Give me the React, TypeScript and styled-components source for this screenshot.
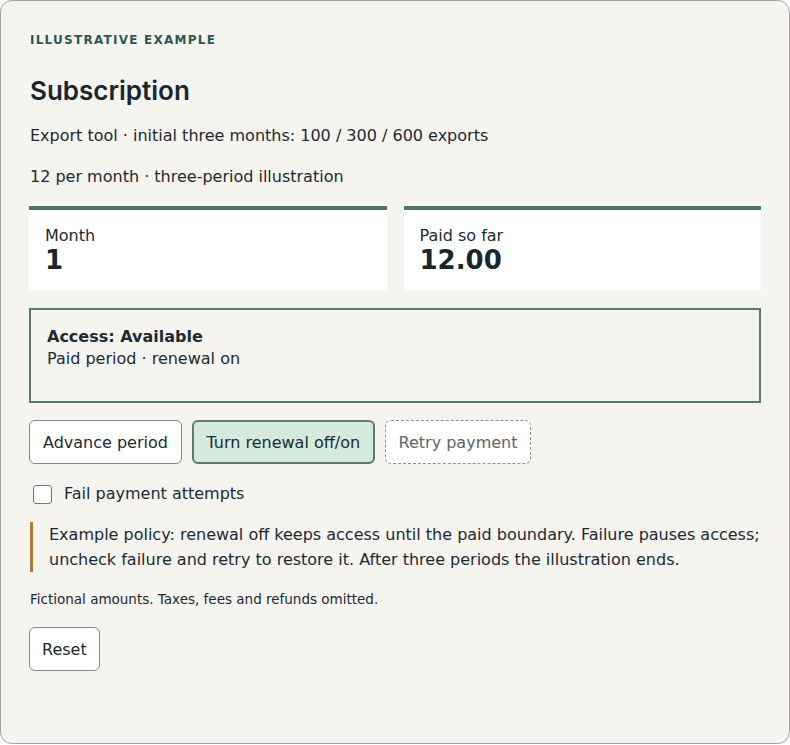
import React, { useState } from "react";
import styled, { createGlobalStyle } from "styled-components";

const GlobalStyle = createGlobalStyle`
    body {
        margin: 0;
        background: #ffffff;
        font-family: "DejaVu Sans", sans-serif;
        color: #1c2a33;
    }
`;

const Card = styled.section`
    box-sizing: border-box;
    width: 790px;
    min-height: 744px;
    padding: 29px 28px 40px;
    background: #f5f4ef;
    border: 1px solid #9aa5a1;
    border-radius: 12px;
`;

const Eyebrow = styled.div`
    padding-left: 1px;
    font-size: 12px;
    font-weight: 700;
    letter-spacing: 1.25px;
    color: #2a5853;
    text-transform: uppercase;
    line-height: 20px;
`;

const Title = styled.h1`
    margin: 24px 0 0;
    padding-left: 1px;
    font-family: Inter, "DejaVu Sans", sans-serif;
    font-size: 26px;
    font-weight: 600;
    line-height: 34px;
    color: #18262f;
`;

const Lead = styled.p`
    margin: 16px 0 0 1px;
    font-size: 16px;
    line-height: 24px;

    & + & {
        margin-top: 17px;
    }
`;

const Stats = styled.div`
    display: grid;
    grid-template-columns: 1fr 1fr;
    gap: 17px;
    margin-top: 17px;
`;

const Stat = styled.div`
    box-sizing: border-box;
    height: 85px;
    padding: 16px 16px 0;
    background: #ffffff;
    border-top: 4px solid #4f7569;
`;

const StatLabel = styled.div`
    font-size: 16px;
    line-height: 19px;
`;

const StatValue = styled.div`
    font-size: 26px;
    font-weight: 700;
    line-height: 30px;
    color: #18262f;
`;

const Status = styled.div`
    box-sizing: border-box;
    min-height: 95px;
    margin-top: 17px;
    padding: 16px 16px;
    border: 2px solid #557a70;
`;

const StatusTitle = styled.div`
    font-size: 16px;
    font-weight: 700;
    line-height: 22px;
`;

const StatusText = styled.div`
    font-size: 16px;
    line-height: 22px;
`;

const Actions = styled.div`
    display: flex;
    gap: 10px;
    margin-top: 17px;
`;

const Button = styled.button<{ variant?: "primary" | "pending" }>`
    box-sizing: border-box;
    height: 44px;
    padding: 0 ${({ variant }) => (variant === "primary" ? "12.5px" : "13px")};
    font-family: "DejaVu Sans", sans-serif;
    font-size: 16px;
    border-radius: 6px;
    cursor: pointer;
    color: ${({ variant }) => (variant === "pending" ? "#5d6468" : "#1c2a33")};
    background: ${({ variant }) => (variant === "primary" ? "#d3eadd" : "#ffffff")};
    border: ${({ variant }) =>
        variant === "primary"
            ? "2px solid #5f7a72"
            : variant === "pending"
            ? "1px dashed #8a9290"
            : "1px solid #7d8a86"};
`;

const CheckRow = styled.label`
    display: flex;
    align-items: center;
    gap: 12px;
    margin: 20px 0 0 4px;
    font-size: 16px;
    line-height: 20px;
`;

const Box = styled.input`
    width: 19px;
    height: 19px;
    margin: 0;
    appearance: none;
    background: #ffffff;
    border: 1px solid #767676;
    border-radius: 3px;

    &:checked {
        background: #4f7569;
    }
`;

const Policy = styled.p`
    margin: 18px 0 0 1px;
    padding: 0 0 0 16px;
    border-left: 3px solid #b07a3f;
    font-size: 16px;
    line-height: 25px;
`;

const Fine = styled.p`
    margin: 17px 0 0 1px;
    font-size: 13.5px;
    line-height: 20px;
`;

const ResetButton = styled(Button)`
    margin-top: 18px;
    padding: 0 12px;
`;

const App: React.FC = () => {
    const [failing, setFailing] = useState(false);

    return (
        <>
            <GlobalStyle />
            <Card>
                <Eyebrow>Illustrative example</Eyebrow>
                <Title>Subscription</Title>
                <Lead>Export tool · initial three months: 100 / 300 / 600 exports</Lead>
                <Lead>12 per month · three-period illustration</Lead>
                <Stats>
                    <Stat>
                        <StatLabel>Month</StatLabel>
                        <StatValue>1</StatValue>
                    </Stat>
                    <Stat>
                        <StatLabel>Paid so far</StatLabel>
                        <StatValue>12.00</StatValue>
                    </Stat>
                </Stats>
                <Status>
                    <StatusTitle>Access: Available</StatusTitle>
                    <StatusText>Paid period · renewal on</StatusText>
                </Status>
                <Actions>
                    <Button>Advance period</Button>
                    <Button variant="primary">Turn renewal off/on</Button>
                    <Button variant="pending">Retry payment</Button>
                </Actions>
                <CheckRow>
                    <Box
                        type="checkbox"
                        checked={failing}
                        onChange={(e) => setFailing(e.target.checked)}
                    />
                    Fail payment attempts
                </CheckRow>
                <Policy>
                    Example policy: renewal off keeps access until the paid boundary. Failure
                    pauses access; uncheck failure and retry to restore it. After three periods
                    the illustration ends.
                </Policy>
                <Fine>Fictional amounts. Taxes, fees and refunds omitted.</Fine>
                <ResetButton>Reset</ResetButton>
            </Card>
        </>
    );
};

export default App;
